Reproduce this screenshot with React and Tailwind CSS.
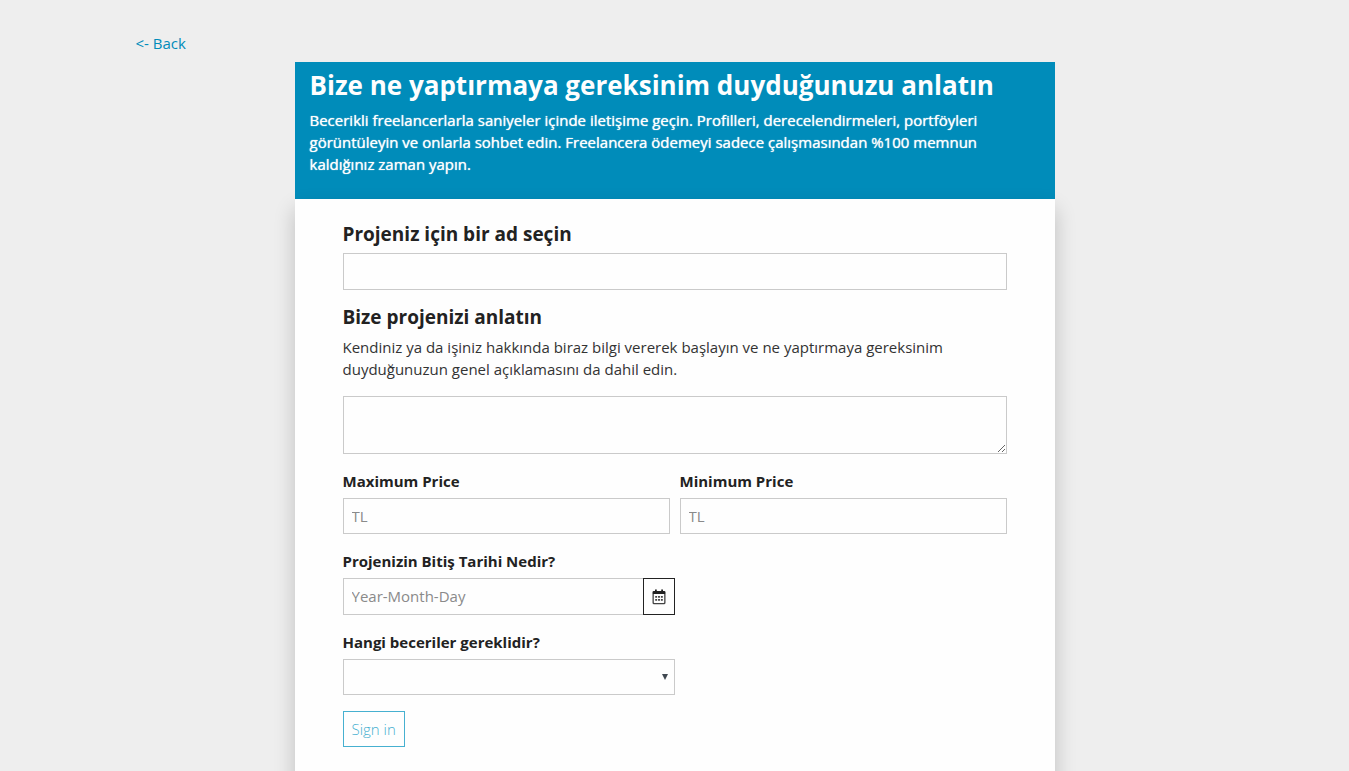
import React from "react";

const label = "block text-[15px] leading-[22px] font-bold";
const field =
  "block w-full border border-[#cacaca] bg-[#fefefe] px-2 text-[15px] placeholder:text-[#8a8a8a] outline-none";

function CalendarIcon() {
  return (
    <svg width="14" height="16" viewBox="0 0 14 16" fill="currentColor" aria-hidden="true">
      <path d="M3 .5h1.800V2h4.400V.5H11V2h1.200a1.300 1.300 0 0 1 1.300 1.300V5H.5V3.300A1.300 1.300 0 0 1 1.800 2H3z" />
      <path
        fillRule="evenodd"
        fillOpacity=".85"
        d="M.5 5h13v8.700a1.500 1.500 0 0 1-1.500 1.500H2a1.500 1.500 0 0 1-1.500-1.500zM1.800 5v8.500c0 .3.200.5.500.5h9.400c.3 0 .5-.2.500-.5V5z"
      />
      <path fillOpacity=".85" d="M3.200 7h1.900v1.700H3.200zM6.050 7h1.900v1.700h-1.900zM8.900 7h1.900v1.700H8.900zM3.200 10h1.900v1.700H3.200zM6.050 10h1.900v1.700h-1.900zM8.900 10h1.900v1.700H8.900z" />
    </svg>
  );
}

export default function App() {
  return (
    <div className="min-h-screen bg-[#eeeeee] font-['Open_Sans',sans-serif] text-[#222222]">
      <div className="mx-auto max-w-[1078px] pt-8">
        <a href="#" className="block w-fit text-[15px] leading-[22px] text-[#008cba]">
          &lt;- Back
        </a>
      </div>
      <main className="mx-auto mt-2 max-w-[760px] bg-[#fefefe]">
        <header className="bg-[#008cba] px-[15px] pt-[5px] pb-6 text-[#fefefe]">
          <h1 className="text-[26px] leading-9 font-bold">
            Bize ne yaptırmaya gereksinim duyduğunuzu anlatın
          </h1>
          <p className="mt-[6px] max-w-[700px] text-[15px] leading-[22px] [text-shadow:0_0_1px_#fefefe]">
            Becerikli freelancerlarla saniyeler içinde iletişime geçin. Profilleri, derecelendirmeleri, portföyleri
            görüntüleyin ve onlarla sohbet edin. Freelancera ödemeyi sadece çalışmasından %100 memnun kaldığınız zaman
            yapın.
          </p>
        </header>
        <form className="px-12 pt-5 pb-12 shadow-[0_10px_20px_rgba(0,0,0,0.2)]" onSubmit={(e) => e.preventDefault()}>
          <label htmlFor="name" className="block text-[19px] leading-[30px] font-bold">
            Projeniz için bir ad seçin
          </label>
          <input id="name" type="text" className={`${field} mt-1 h-[37px]`} />

          <label htmlFor="about" className="mt-3 block text-[19px] leading-[30px] font-bold">
            Bize projenizi anlatın
          </label>
          <p className="mt-1 text-[15px] leading-[22px] text-[#333333]">
            Kendiniz ya da işiniz hakkında biraz bilgi vererek başlayın ve ne yaptırmaya gereksinim duyduğunuzun genel
            açıklamasını da dahil edin.
          </p>
          <textarea id="about" className={`${field} mt-4 h-[58px] py-2`} />

          <div className="mt-4 grid grid-cols-2 gap-[10px]">
            <div>
              <label htmlFor="max" className={label}>Maximum Price</label>
              <input id="max" type="text" placeholder="TL" className={`${field} mt-[6px] h-9`} />
            </div>
            <div>
              <label htmlFor="min" className={label}>Minimum Price</label>
              <input id="min" type="text" placeholder="TL" className={`${field} mt-[6px] h-9`} />
            </div>
          </div>

          <div className="mt-4 w-1/2">
            <label htmlFor="date" className={label}>Projenizin Bitiş Tarihi Nedir?</label>
            <div className="mt-[6px] flex h-[37px]">
              <input id="date" type="text" placeholder="Year-Month-Day" className={`${field} min-w-0 flex-1 border-r-0`} />
              <button type="button" aria-label="Calendar" className="flex w-8 items-center justify-center border border-[#222222]">
                <CalendarIcon />
              </button>
            </div>
          </div>

          <div className="mt-4 w-1/2">
            <label htmlFor="skills" className={label}>Hangi beceriler gereklidir?</label>
            <div className="relative mt-[6px]">
              <select id="skills" className={`${field} h-9 appearance-none`} />
              <svg className="pointer-events-none absolute top-[15px] right-[7px]" width="6" height="6" viewBox="0 0 6 6" fill="#404850" aria-hidden="true">
                <path d="M0 0h6L3 6z" />
              </svg>
            </div>
          </div>

          <button type="submit" className="mt-4 block h-9 border border-[#46b0d0] px-2 text-[15px] font-light text-[#46b0d0]">
            Sign in
          </button>
        </form>
      </main>
    </div>
  );
}
